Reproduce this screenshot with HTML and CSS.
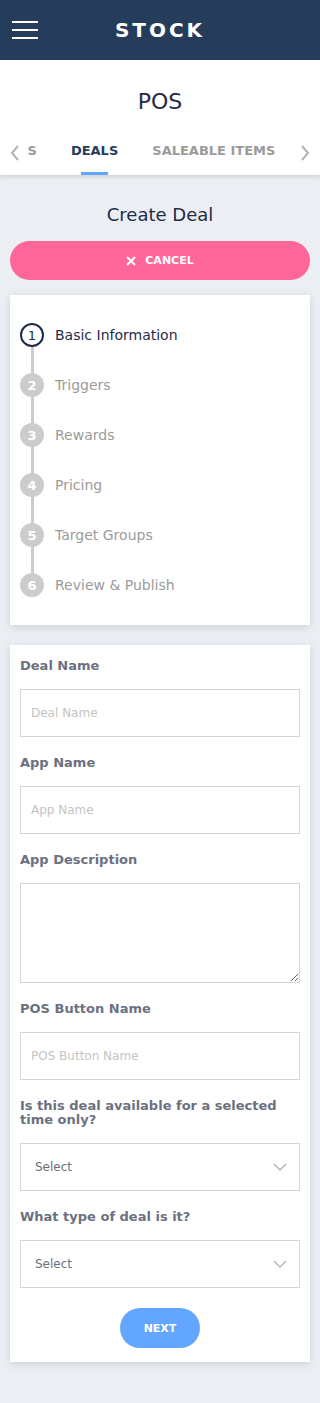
FILE: index.html
```html
<!DOCTYPE html>
<html lang="en">
  <head>
    <meta charset="UTF-8" />
    <meta name="viewport" content="width=device-width, initial-scale=1.0" />
    <title>Stock - Create Deal</title>
    <link rel="stylesheet" href="styles.css">
  </head>
  <body>
    <header class="topbar">
      <button class="menu-btn" aria-label="Menu">
        <span></span><span></span><span></span>
      </button>
      <h1 class="brand">STOCK</h1>
    </header>

    <section class="page-head">
      <h2 class="page-title">POS</h2>
      <nav class="tab-nav">
        <button class="chev" aria-label="Previous">
          <svg width="10" height="16" viewBox="0 0 10 16"><path d="M8 1 L2 8 L8 15" fill="none" stroke="#b4b4b4" stroke-width="2"/></svg>
        </button>
        <div class="tab-viewport" id="tabViewport">
          <div class="tab-list">
            <a class="tab">ITEMS</a>
            <a class="tab active" id="activeTab">DEALS</a>
            <a class="tab">SALEABLE ITEMS</a>
            <a class="tab">MODIFIERS</a>
          </div>
        </div>
        <button class="chev" aria-label="Next">
          <svg width="10" height="16" viewBox="0 0 10 16"><path d="M2 1 L8 8 L2 15" fill="none" stroke="#b4b4b4" stroke-width="2"/></svg>
        </button>
      </nav>
    </section>

    <main class="content">
      <h3 class="section-title">Create Deal</h3>
      <button class="btn-cancel">
        <svg width="10" height="10" viewBox="0 0 10 10"><path d="M1 1 L9 9 M9 1 L1 9" stroke="#fff" stroke-width="2"/></svg>
        CANCEL
      </button>

      <div class="card steps-card">
        <ol class="steps">
          <li class="step current"><span class="num">1</span>Basic Information</li>
          <li class="step"><span class="num">2</span>Triggers</li>
          <li class="step"><span class="num">3</span>Rewards</li>
          <li class="step"><span class="num">4</span>Pricing</li>
          <li class="step"><span class="num">5</span>Target Groups</li>
          <li class="step"><span class="num">6</span>Review &amp; Publish</li>
        </ol>
      </div>

      <form class="card form-card">
        <label for="dealName">Deal Name</label>
        <input type="text" id="dealName" placeholder="Deal Name" />

        <label for="appName">App Name</label>
        <input type="text" id="appName" placeholder="App Name" />

        <label for="appDesc">App Description</label>
        <textarea id="appDesc"></textarea>

        <label for="posName">POS Button Name</label>
        <input type="text" id="posName" placeholder="POS Button Name" />

        <label for="timed">Is this deal available for a selected time only?</label>
        <div class="select-wrap">
          <select id="timed">
            <option>Select</option>
            <option>Yes</option>
            <option>No</option>
          </select>
          <svg class="select-arrow" width="14" height="8" viewBox="0 0 14 8"><path d="M1 1 L7 7 L13 1" fill="none" stroke="#b9b9b9" stroke-width="1.5"/></svg>
        </div>

        <label for="dealType">What type of deal is it?</label>
        <div class="select-wrap">
          <select id="dealType">
            <option>Select</option>
          </select>
          <svg class="select-arrow" width="14" height="8" viewBox="0 0 14 8"><path d="M1 1 L7 7 L13 1" fill="none" stroke="#b9b9b9" stroke-width="1.5"/></svg>
        </div>

        <button type="submit" class="btn-next">NEXT</button>
      </form>
    </main>

    <script>
      // keep the active tab in view
      var viewport = document.getElementById("tabViewport");
      var active = document.getElementById("activeTab");
      viewport.scrollLeft = active.offsetLeft - 43;
    </script>
  </body>
</html>
```

FILE: styles.css
```css
* {
  box-sizing: border-box;
}
body {
  margin: 0;
  font-family: "DejaVu Sans", "Open Sans", sans-serif;
  background-color: #ebeff3;
  color: #1f2b47;
}
button {
  font-family: inherit;
  border: none;
  cursor: pointer;
}
.topbar {
  height: 60px;
  background-color: #253c5b;
  display: grid;
  grid-template-columns: 50px 1fr 50px;
  align-items: center;
}
.menu-btn {
  background: none;
  padding: 0 0 0 12px;
  display: flex;
  flex-direction: column;
  gap: 6px;
}
.menu-btn span {
  display: block;
  width: 26px;
  height: 2px;
  background: #fff;
}
.brand {
  margin: 0;
  text-align: center;
  color: #fff;
  font-size: 20px;
  font-weight: bold;
  letter-spacing: 3px;
}
.page-head {
  background: white;
  padding-top: 28px;
  box-shadow: 0 2px 4px rgba(0, 0, 0, 0.12);
  position: relative;
}
.page-title {
  margin: 0 0 14px;
  text-align: center;
  font-size: 22px;
  font-weight: normal;
  line-height: 28px;
  color: #1f2b47;
}
.tab-nav {
  display: flex;
  align-items: flex-start;
}
.chev {
  background: none;
  width: 28px;
  height: 45px;
  padding: 0;
  display: flex;
  align-items: center;
}
.chev:first-child {
  padding-left: 10px;
}
.chev:last-child {
  width: 24px;
  justify-content: flex-end;
  padding-right: 10px;
}
.tab-viewport {
  flex: 1;
  overflow: hidden;
  position: relative;
}
.tab-viewport::before {
  content: "";
  position: absolute;
  left: 0;
  top: 0;
  width: 14px;
  height: 100%;
  background: linear-gradient(to right, #fff 10%, rgba(255, 255, 255, 0.45));
  z-index: 1;
}
.tab-list {
  display: flex;
  gap: 34px;
  white-space: nowrap;
}
.tab {
  font-size: 13px;
  font-weight: bold;
  line-height: 16px;
  color: #9b9b9b;
  padding: 13px 0;
  border-bottom: 3px solid transparent;
  display: flex;
  justify-content: center;
  position: relative;
}
.tab.active {
  color: #253c5b;
}
.tab.active::after {
  content: "";
  position: absolute;
  bottom: -3px;
  width: 27px;
  height: 3px;
  background: #62a6ff;
}
.content {
  padding: 28px 10px 41px;
}
.section-title {
  margin: 0 0 14px;
  text-align: center;
  font-size: 18px;
  font-weight: normal;
  line-height: 24px;
  color: #1f2b47;
}
.btn-cancel {
  width: 100%;
  height: 39px;
  border-radius: 20px;
  background-color: #ff6699;
  color: white;
  font-size: 11px;
  font-weight: bold;
  display: flex;
  align-items: center;
  justify-content: center;
  gap: 9px;
}
.card {
  background: white;
  box-shadow: 0 2px 8px rgba(0, 0, 0, 0.13);
}
.steps-card {
  margin-top: 15px;
  padding: 15px 10px;
}
.steps {
  list-style: none;
  margin: 0;
  padding: 0;
}
.step {
  height: 50px;
  display: flex;
  align-items: center;
  gap: 11px;
  font-size: 14px;
  color: #9b9b9b;
  position: relative;
}
.step::after {
  content: "";
  position: absolute;
  left: 10.5px;
  top: 25px;
  width: 3px;
  height: 50px;
  background: #cccccc;
}
.step:last-child::after {
  display: none;
}
.num {
  width: 24px;
  height: 24px;
  border-radius: 50%;
  background: #cccccc;
  color: white;
  font-size: 13px;
  font-weight: bold;
  display: flex;
  align-items: center;
  justify-content: center;
  position: relative;
  z-index: 1;
}
.step.current {
  color: #1f2b47;
}
.step.current .num {
  background: white;
  border: 2px solid #1f2b47;
  color: #1f2b47;
  font-weight: normal;
}
.form-card {
  margin-top: 20px;
  padding: 14px 10px 14px;
  display: flex;
  flex-direction: column;
}
.form-card label {
  font-size: 13px;
  font-weight: bold;
  line-height: 14px;
  color: #6c7180;
  margin: 19px 0 16px;
}
.form-card label:first-child {
  margin-top: 0;
}
input,
textarea,
select {
  width: 100%;
  font-family: inherit;
  border: 1px solid #d4d4d4;
  border-radius: 0;
  background: white;
  outline: none;
}
input {
  height: 48px;
  padding: 0 10px;
  font-size: 12px;
}
input::placeholder {
  color: #c4c4c4;
}
textarea {
  height: 100px;
  display: block;
}
.select-wrap {
  position: relative;
}
select {
  height: 48px;
  padding: 0 14px;
  font-size: 12px;
  color: #6b6f7a;
  appearance: none;
  -webkit-appearance: none;
}
.select-arrow {
  position: absolute;
  right: 13px;
  top: 20px;
  pointer-events: none;
}
.btn-next {
  align-self: center;
  margin-top: 20px;
  width: 80px;
  height: 40px;
  border-radius: 20px;
  background-color: #63a6ff;
  color: white;
  font-size: 11px;
  font-weight: bold;
}
```
